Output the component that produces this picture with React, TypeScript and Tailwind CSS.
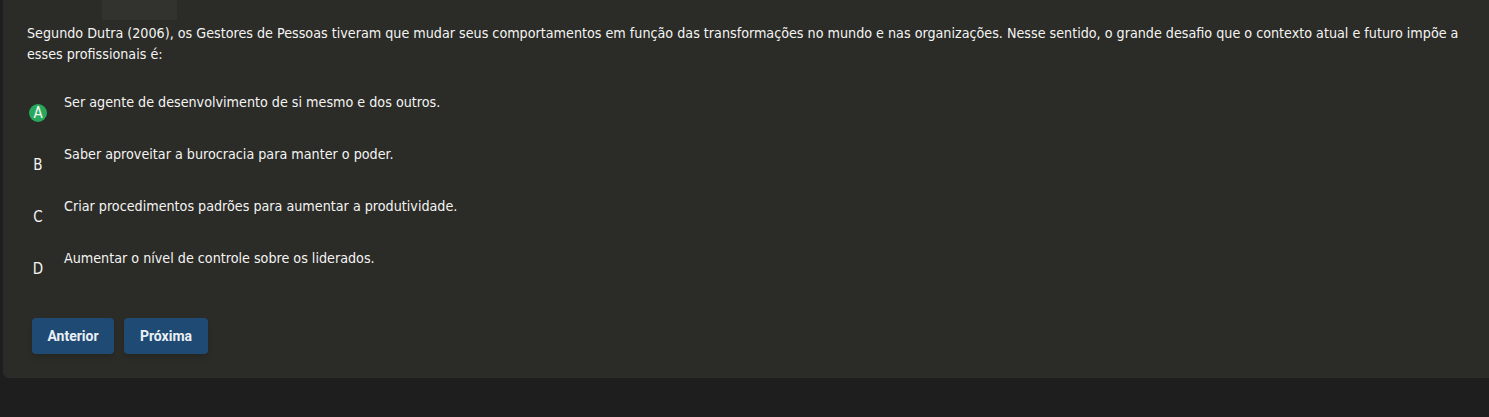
const OPTIONS = [
    { letter: "A", text: "Ser agente de desenvolvimento de si mesmo e dos outros.", selected: true },
    { letter: "B", text: "Saber aproveitar a burocracia para manter o poder." },
    { letter: "C", text: "Criar procedimentos padrões para aumentar a produtividade." },
    { letter: "D", text: "Aumentar o nível de controle sobre os liderados." },
];

const FONT = "font-['Liberation_Sans_Narrow','DejaVu_Sans_Condensed',sans-serif]";

export default function App() {
    return (
        <div className="min-h-screen bg-[#1e1e1e] pl-[3px]">
            <div className={`rounded-bl-md bg-[#2b2b27] pb-[24px] pl-6 pr-1 text-[14.2px] text-[#f4f4f2] ${FONT}`}>
                <div className="pl-[75px]">
                    <div className="h-5 w-[75px] bg-[#32322f]" />
                </div>
                <p className="mt-[3px] leading-[21px]">
                    Segundo Dutra (2006), os Gestores de Pessoas tiveram que mudar seus comportamentos em função das
                    transformações no mundo e nas organizações. Nesse sentido, o grande desafio que o contexto atual e
                    futuro impõe a esses profissionais é:
                </p>
                <ul className="mt-[27px] flex flex-col gap-[22px]">
                    {OPTIONS.map((o) => (
                        <li key={o.letter} className="flex items-start gap-[17px] pl-[2px]">
                            <span
                                className={`mt-[12px] flex h-[18px] w-[18px] flex-none items-center justify-center rounded-full text-[15px] leading-none ${
                                    o.selected ? "bg-[#27a85c]" : ""
                                }`}
                            >
                                {o.letter}
                            </span>
                            <span className="leading-[21px]">{o.text}</span>
                        </li>
                    ))}
                </ul>
                <div className="mt-[40px] flex gap-[10px] pl-[5px] font-['Roboto',sans-serif]">
                    <button
                        type="button"
                        className="h-9 w-[82px] rounded bg-[#1f4a73] text-[14px] font-bold text-[#eaf0f6] shadow-md"
                    >
                        Anterior
                    </button>
                    <button
                        type="button"
                        className="h-9 w-[84px] rounded bg-[#1f4a73] text-[14px] font-bold text-[#eaf0f6] shadow-md"
                    >
                        Próxima
                    </button>
                </div>
            </div>
        </div>
    );
}
